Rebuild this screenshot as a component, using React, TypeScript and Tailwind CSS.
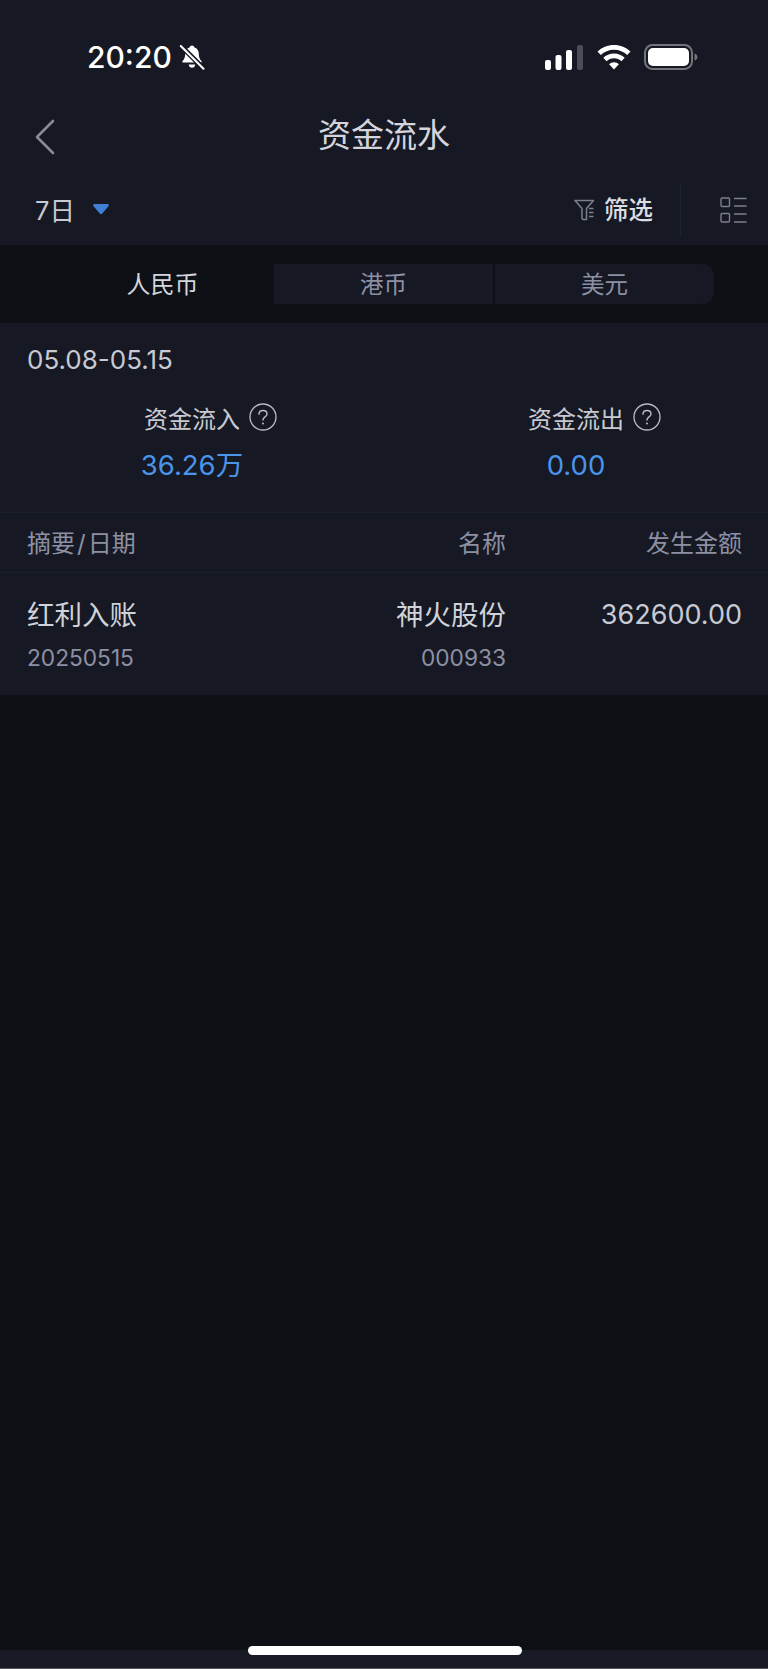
import React from "react";

const font = { fontFamily: 'Inter, "Noto Sans CJK SC", sans-serif' };

function Help() {
  return (
    <svg width="28" height="28" viewBox="0 0 28 28" fill="none" className="shrink-0">
      <circle cx="14" cy="14" r="13" stroke="#b9bbc4" strokeWidth="1.3" />
      <path d="M10 11.2c0-2.4 1.8-3.7 4-3.7s4 1.3 4 3.4c0 3-4 3-4 6.1" stroke="#b9bbc4" strokeWidth="1.4" strokeLinecap="round" />
      <circle cx="14" cy="20.6" r="1" fill="#b9bbc4" />
    </svg>
  );
}

function Stat({ label, value }: { label: string; value: string }) {
  return (
    <div className="flex-1 flex flex-col items-center">
      <div className="relative h-[36px] flex items-center text-[24px] leading-[40px] text-[#c8cad3]">
        {label}
        <div className="absolute left-[105px] top-[1px]">
          <Help />
        </div>
      </div>
      <div className="mt-[7px] h-[40px] text-[27.500px] leading-[40px] text-[#4a94ea]">{value}</div>
    </div>
  );
}

export default function App() {
  return (
    <div style={font} className="w-[768px] h-[1669px] flex flex-col bg-[#0d1015] overflow-hidden">
      <div className="bg-[#161923] h-[245px] flex flex-col shrink-0">
        <div className="h-[90px] pt-[38px] pl-[87px] pr-[70px] flex items-start justify-between">
          <div className="flex items-center h-[38px]">
            <span className="text-[30px] leading-[38px] font-medium text-white">20:20</span>
            <svg width="26" height="26" viewBox="0 0 26 26" className="ml-[7px]">
              <path d="M13 1.5c1.3 0 2 .8 2.2 1.8 3 .9 4.6 3.3 4.6 6.5 0 3.6 1 5.6 2.6 7.2.6.7.2 1.6-.7 1.6H4.3c-.9 0-1.3-.9-.7-1.6C5.200 15.400 6.200 13.400 6.200 9.800c0-3.200 1.600-5.600 4.600-6.500.2-1 .9-1.800 2.200-1.800z" fill="#fff" />
              <path d="M9.700 20.400h6.600c-.2 2-1.500 3.300-3.300 3.300s-3.100-1.300-3.300-3.300z" fill="#fff" />
              <path d="M2.500 2.500 L24 24" stroke="#161923" strokeWidth="5" />
              <path d="M1.800 2 L24.500 24.700" stroke="#fff" strokeWidth="2" strokeLinecap="round" />
            </svg>
          </div>
          <div className="flex items-center h-[38px]">
            <svg width="39" height="25" viewBox="0 0 39 25">
              <rect x="0" y="15" width="6" height="10" rx="2" fill="#fff" />
              <rect x="10.500" y="10" width="6" height="15" rx="2" fill="#fff" />
              <rect x="21" y="5" width="6" height="20" rx="2" fill="#fff" />
              <rect x="32" y="0" width="6" height="25" rx="2" fill="#4a4d55" />
            </svg>
            <svg width="34" height="25" viewBox="0 0 34 25" className="ml-[13px]">
              <path d="M17 0C10.500 0 4.800 2.500.5 6.600l3.300 3.500C7.200 6.800 11.900 4.800 17 4.800s9.800 2 13.200 5.300l3.300-3.500C29.200 2.500 23.500 0 17 0z" fill="#fff" />
              <path d="M17 8.500c-4.200 0-8 1.700-10.700 4.300l3.300 3.500c1.900-1.800 4.500-3 7.400-3s5.500 1.200 7.400 3l3.300-3.500C25 10.200 21.200 8.500 17 8.500z" fill="#fff" />
              <path d="M17 17.300c-2 0-3.700.8-4.900 2L17 24.600l4.900-5.300c-1.200-1.200-2.900-2-4.900-2z" fill="#fff" />
            </svg>
            <svg width="54" height="26" viewBox="0 0 54 26" className="ml-[13px]">
              <rect x="1" y="1" width="47" height="24" rx="7.500" fill="none" stroke="#72747a" strokeWidth="2" />
              <rect x="4" y="4" width="41" height="18" rx="5" fill="#fff" />
              <path d="M50.500 9.500c2 .5 3 2 3 3.500s-1 3-3 3.500z" fill="#72747a" />
            </svg>
          </div>
        </div>
        <div className="h-[92px] relative flex items-center justify-center">
          <svg width="22" height="36" viewBox="0 0 22 36" className="absolute left-[34px] top-[29px]">
            <path d="M19 2 L3 18 L19 34" fill="none" stroke="#8a8b90" strokeWidth="2.600" strokeLinecap="round" strokeLinejoin="round" />
          </svg>
          <span className="text-[33px] leading-[44px] text-[#d4d5dc] mt-[-2px]">资金流水</span>
        </div>
        <div className="flex-1 flex items-start relative">
          <div className="flex items-center pl-[35px] h-[48px] mt-[5px]">
            <span className="text-[25.500px] leading-[48px] text-[#c8cad3]">7日</span>
            <svg width="16" height="11" viewBox="0 0 16 11" className="ml-[18px] mb-[3px]">
              <path d="M1.500 0h13c1.200 0 1.800 1.300 1 2.200L9 9.800c-.5.600-1.500.600-2 0L.5 2.200C-.3 1.300.3 0 1.500 0z" fill="#3f7fd6" />
            </svg>
          </div>
          <div className="ml-auto flex items-start h-[54px] mt-[4px]">
            <div className="flex items-center h-[50px] mt-[-1px]">
              <svg width="21" height="22" viewBox="0 0 21 22" fill="none" className="mr-[9px]">
                <path d="M1 1.500h18.500L12.500 9.500V20.500H9.500Q8 20.500 8 18.500V9.500z" stroke="#7c7f8c" strokeWidth="1.500" strokeLinejoin="round" />
                <path d="M15 9.500h4.500M15 13.500h4.500M15 17.500h4.500" stroke="#7c7f8c" strokeWidth="1.400" />
              </svg>
              <span className="text-[24.500px] leading-[50px] font-medium text-[#dcdde3]">筛选</span>
            </div>
            <div className="w-[1px] h-[54px] ml-[27px] bg-[#1f232e] mt-[-3px]"></div>
            <div className="w-[87px] flex justify-center pt-[11px] pl-[17px]">
              <svg width="27" height="27" viewBox="0 0 27 27" fill="none">
                <rect x="1" y="1" width="8.500" height="8.500" rx="1" stroke="#7c7f8c" strokeWidth="1.400" />
                <rect x="1" y="16.500" width="8.500" height="8.500" rx="1" stroke="#7c7f8c" strokeWidth="1.400" />
                <path d="M14 1.500h12.500M14 9h12.500M14 17h12.500M14 25h12.500" stroke="#7c7f8c" strokeWidth="1.400" />
              </svg>
            </div>
          </div>
        </div>
      </div>

      <div className="h-[78px] shrink-0 pt-[19px] pl-[55px] pr-[54px]">
        <div className="flex h-[40px] text-[23.500px] leading-[42px] text-[#8d90a3]">
          <div className="w-[219px] text-center pr-[4px] text-[#d4d5dc] text-[24px] rounded-l-[12px]">人民币</div>
          <div className="w-[221px] text-center bg-[#161923] border-r-[2px] border-[#0d1015]">港币</div>
          <div className="flex-1 text-center bg-[#161923] rounded-r-[12px]">美元</div>
        </div>
      </div>

      <div className="bg-[#161923] h-[372px] shrink-0 flex flex-col">
        <div className="pl-[27px] pt-[20px] h-[65px] text-[26px] leading-[34px] text-[#c8cad3]">05.08-05.15</div>
        <div className="flex h-[124px] pt-[14px]">
          <Stat label="资金流入" value="36.26万" />
          <Stat label="资金流出" value="0.00" />
        </div>
        <div className="h-[61px] border-t border-b border-[#1b1f2a] pl-[27px] pr-[26px] pt-[2px] flex items-center text-[24px] text-[#8d90a3]">
          <div className="flex-1 whitespace-nowrap flex items-center">摘要<span className="mx-[2px]">/</span>日期</div>
          <div className="w-[196px] text-right">名称</div>
          <div className="w-[236px] text-right">发生金额</div>
        </div>
        <div className="flex-1 pl-[27px] pr-[26px] pt-[22px] flex items-start">
          <div className="flex-1">
            <div className="text-[27.500px] leading-[40px] text-[#d0d2da]">红利入账</div>
            <div className="mt-[8px] text-[22.700px] leading-[30px] text-[#8d90a3]">20250515</div>
          </div>
          <div className="w-[196px] text-right">
            <div className="text-[27.500px] leading-[40px] text-[#d0d2da]">神火股份</div>
            <div className="mt-[8px] text-[22.700px] leading-[30px] text-[#8d90a3]">000933</div>
          </div>
          <div className="w-[236px] text-right text-[27px] leading-[40px] text-[#c8cad3]">362600.00</div>
        </div>
      </div>

      <div className="flex-1"></div>
      <div className="relative h-[19px] bg-[#181b26] shrink-0 border-b border-[#55565c]">
        <div className="absolute left-[248px] top-[-4px] w-[274px] h-[9px] rounded-full bg-white"></div>
      </div>
    </div>
  );
}
